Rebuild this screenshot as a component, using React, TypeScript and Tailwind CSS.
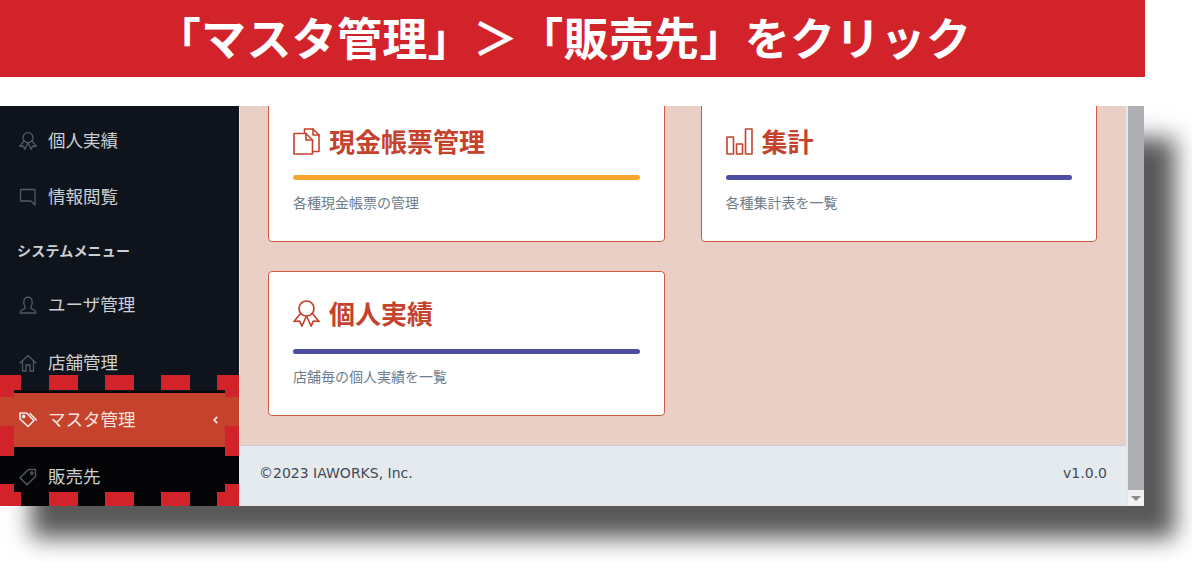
import React from 'react';

const cjk = "font-['Noto_Sans_CJK_JP','Noto_Sans',sans-serif]";

interface IconProps {
  size: number;
  strokeWidth?: number;
}

const line = (strokeWidth: number) => ({
  fill: 'none',
  stroke: 'currentColor',
  strokeWidth,
  strokeLinejoin: 'round' as const,
  strokeLinecap: 'round' as const,
});

const MedalIcon: React.FC<IconProps> = ({ size, strokeWidth = 1.7 }) => (
  <svg width={size} height={size} viewBox="0 0 27 27" {...line(strokeWidth)}>
    <circle cx="13.5" cy="8.5" r="7.5" />
    <path d="M7.5 13.5L1 21.5L6.5 21L9 26L13 17" />
    <path d="M19.5 13.5L26 21.5L20.5 21L18 26L14 17" />
  </svg>
);

const CommentIcon: React.FC<IconProps> = ({ size, strokeWidth = 1.3 }) => (
  <svg width={size} height={size} viewBox="0 0 18 18" {...line(strokeWidth)}>
    <path d="M16 13V1.5H1.5V13H12L16 17V13" />
  </svg>
);

const UserIcon: React.FC<IconProps> = ({ size, strokeWidth = 1.3 }) => (
  <svg width={size} height={size} viewBox="0 0 18 18" {...line(strokeWidth)}>
    <path d="M6 10.5C4 8 4 1.5 9 1.2C14 1.5 14 8 12 10.5V12.3C14 13.3 17 14 17 17H1C1 14 4 13.3 6 12.3Z" />
  </svg>
);

const HomeIcon: React.FC<IconProps> = ({ size, strokeWidth = 1.3 }) => (
  <svg width={size} height={size} viewBox="0 0 18 18" {...line(strokeWidth)}>
    <path d="M1 9L9 1.5L17 9" />
    <path d="M3.5 7V17H7V11H11V17H14.5V7" />
  </svg>
);

const TagsIcon: React.FC<IconProps> = ({ size, strokeWidth = 1.7 }) => (
  <svg width={size} height={size} viewBox="0 0 18 18" {...line(strokeWidth)}>
    <path d="M1 2H7.5L15 9.5L9 15.5L1 8Z" />
    <circle cx="4.6" cy="5.4" r="1" />
    <path d="M11 2.5L17.3 9" />
  </svg>
);

const TagIcon: React.FC<IconProps> = ({ size, strokeWidth = 1.4 }) => (
  <svg width={size} height={size} viewBox="0 0 18 18" {...line(strokeWidth)}>
    <path d="M16.5 1.5H9.5L1 9.8L8 16.8L16.5 8.5Z" />
    <circle cx="12.8" cy="5.2" r="1.2" />
  </svg>
);

const DocsIcon: React.FC<IconProps> = ({ size, strokeWidth = 1.6 }) => (
  <svg width={size} height={size} viewBox="0 0 27 27" {...line(strokeWidth)}>
    <path d="M1 5.5H13L19.5 12V26H1Z" />
    <path d="M13 5.5V12H19.5" />
    <path d="M11.5 5V1H20L26 7V23.5H20" />
    <path d="M20 1V7H26" />
  </svg>
);

const BarsIcon: React.FC<IconProps> = ({ size, strokeWidth = 1.6 }) => (
  <svg width={size} height={size} viewBox="0 0 27 27" {...line(strokeWidth)}>
    <rect x="1" y="9" width="6.5" height="17" />
    <rect x="10.5" y="16" width="6" height="10" />
    <rect x="19.5" y="1" width="6.5" height="25" />
  </svg>
);

interface NavProps {
  icon: React.ReactNode;
  label: string;
  className?: string;
}

const NavRow: React.FC<NavProps> = ({ icon, label, className }) => (
  <div className={`flex items-center pl-[19px] text-[17.5px] leading-none text-[#ccd0d5] ${className ?? 'h-[56px]'}`}>
    <span className="w-[29px] text-[#4f5a64]">{icon}</span>
    <span className="pb-[2px]">{label}</span>
  </div>
);

interface CardProps {
  icon: React.ReactNode;
  title: string;
  desc: string;
  bar: string;
  titleClass?: string;
}

const Card: React.FC<CardProps> = ({ icon, title, desc, bar, titleClass }) => (
  <div className="h-[145px] bg-white border border-[#cf5b3d] rounded-[4px] px-[24px] pt-[27px]">
    <div className={`flex items-center h-[32px] text-[#c5432d] font-bold text-[26px] leading-none ${titleClass ?? ''}`}>
      <span className="w-[36px]">{icon}</span>
      <span>{title}</span>
    </div>
    <div className={`mt-[18px] h-[5px] rounded-full ${bar}`} />
    <div className="mt-[13px] text-[14px] leading-[18px] text-[#6f7c8b]">{desc}</div>
  </div>
);

// 赤い破線の囲み(注釈)
const DashedFrame = () => (
  <svg className="absolute left-0 top-[269px]" width="239" height="131" viewBox="0 0 239 131" fill="#d2232a">
    <path d="M0 0H21V15H14V22H0Z" />
    <path d="M49 0H78V15H49ZM105 0H134V15H105ZM161 0H190V15H161Z" />
    <path d="M217 0H239V22H225V15H217Z" />
    <path d="M0 51H14V81H0ZM225 51H239V81H225Z" />
    <path d="M0 109H14V117H21V131H0Z" />
    <path d="M49 117H78V131H49ZM105 117H134V131H105ZM161 117H190V131H161Z" />
    <path d="M225 109H239V131H217V117H225Z" />
  </svg>
);

export default function App() {
  return (
    <div className={`w-[1192px] h-[562px] overflow-hidden bg-white ${cjk}`}>
      <div className="w-[1145px] h-[77px] bg-[#d2232a] flex items-center justify-center pr-[18px] pb-[4px] text-white font-bold text-[45px] leading-none tracking-[0.3px]">
        「マスタ管理」＞「販売先」をクリック
      </div>

      <div className="relative mt-[29px] w-[1144px] h-[400px] flex shadow-[31px_32px_22px_#595959]">
        <aside className="w-[239px] shrink-0 bg-[#0f141c] overflow-hidden pt-[7px]">
          <NavRow icon={<MedalIcon size={18} strokeWidth={2} />} label="個人実績" />
          <NavRow icon={<CommentIcon size={18} />} label="情報閲覧" />
          <div className="h-[52px] pl-[17px] pb-[2px] flex items-center text-[14px] font-bold tracking-[0.2px] text-[#ccd0d5]">システムメニュー</div>
          <NavRow icon={<UserIcon size={18} />} label="ユーザ管理" />
          <NavRow icon={<HomeIcon size={18} />} label="店舗管理" className="h-[56px] mt-[2px]" />
          <div className="h-[2px] bg-[#050508]" />
          <div className="h-[54px] bg-[#c5432d] flex items-center pl-[19px] pr-[21px] text-[17.5px] leading-none text-[#f3e4df]">
            <span className="w-[29px]"><TagsIcon size={18} /></span>
            <span className="flex-1 pb-[2px]">マスタ管理</span>
            <svg width="5" height="8" viewBox="0 0 5 8" fill="none" stroke="currentColor" strokeWidth="1.8">
              <path d="M4.2 0.8L1.2 4L4.2 7.2" />
            </svg>
          </div>
          <div className="h-[60px] bg-[#050508]">
            <NavRow icon={<TagIcon size={18} />} label="販売先" className="h-[60px]" />
          </div>
        </aside>
        <div className="w-px bg-[#f2e3df]" />

        <main className="flex-1 flex flex-col min-w-0 overflow-hidden">
          <div className="flex-1 bg-[#eacfc7] overflow-hidden pl-[28px] pr-[29px]">
            <div className="grid grid-cols-2 gap-x-[36px] gap-y-[29px] -mt-[9px]">
              <Card icon={<DocsIcon size={27} />} title="現金帳票管理" desc="各種現金帳票の管理" bar="bg-[#f9a631]" />
              <Card icon={<BarsIcon size={27} />} title="集計" desc="各種集計表を一覧" bar="bg-[#4d4ea3]" />
              <Card icon={<MedalIcon size={27} />} title="個人実績" desc="店舗毎の個人実績を一覧" bar="bg-[#4d4ea3]" titleClass="-translate-y-[2px]" />
            </div>
          </div>
          <footer className="h-[61px] shrink-0 bg-[#e5eaee] border-t border-[#c3ced6] flex items-center justify-between pl-[19px] pr-[19px] pb-[5px] text-[14px] text-[#414b57] font-['DejaVu_Sans',sans-serif]">
            <span>©2023 IAWORKS, Inc.</span>
            <span>v1.0.0</span>
          </footer>
        </main>

        <div className="w-[2px] bg-[#e6e6e6]" />
        <div className="w-[16px] shrink-0 bg-[#aeafb2] flex flex-col justify-end">
          <div className="h-[16px] bg-[#f1f1f1] flex items-center justify-center">
            <div className="w-0 h-0 border-l-[5px] border-r-[5px] border-t-[5px] border-l-transparent border-r-transparent border-t-[#8a8a8a]" />
          </div>
        </div>

        <DashedFrame />
      </div>
    </div>
  );
}
